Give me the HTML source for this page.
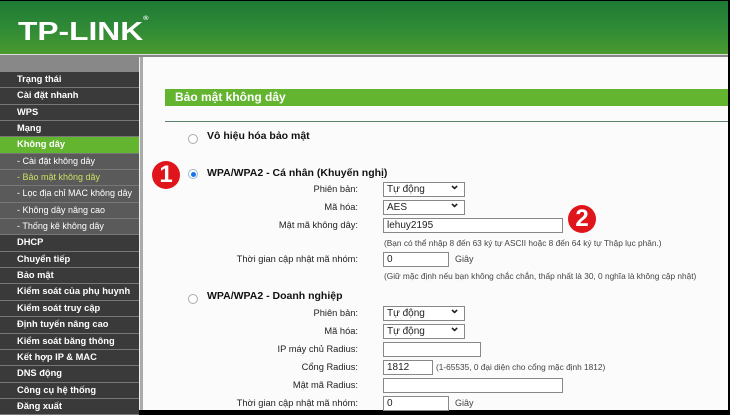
<!DOCTYPE html><html><head><meta charset="utf-8"><style>
*{margin:0;padding:0;box-sizing:border-box}
body{width:730px;height:410px;overflow:hidden;background:#000;font-family:"Liberation Sans",Arial,sans-serif;position:relative}
.hdr{position:absolute;left:0;top:1px;width:728px;height:53px;background:linear-gradient(#1e7a34,#2f8a36 50%,#4a9a30)}
.logo{position:absolute;left:18px;top:15px;color:#fff;font-weight:bold;font-size:26px;transform:scaleX(1.22);transform-origin:left}
.sep{position:absolute;left:0;top:54px;width:728px;height:3px;background:#888;border-top:1px solid #ddd}
.side{position:absolute;left:0;top:57px;width:139px;height:353px;background:#333}
.side .top{height:15px;background:#888}
.it{height:16.35px;border-bottom:1px solid #777;color:#fff;font-size:9.3px;font-weight:bold;padding-left:17px;line-height:15px;background:#3a3a3a;white-space:nowrap;overflow:hidden}
.it.s{background:#5a5a5a;font-weight:normal;font-size:9px}
.it.g{background:#63b530}
.it.y{color:#c8e060}
.bar{position:absolute;left:139px;top:57px;width:4px;height:353px;background:#aaa;border-left:1px solid #eee}
.main{position:absolute;left:143px;top:57px;width:585px;height:353px;background:#fbfbfb}
.title{position:absolute;left:165px;top:89px;width:563px;height:17px;background:#63b530;color:#fff;font-size:12px;font-weight:bold;padding-left:10px;line-height:17px}
.hl{position:absolute;left:165px;top:121px;width:563px;height:1px;background:#5a7f6a}
.t{position:absolute;font-size:10px;color:#111;white-space:nowrap}
.b{font-weight:bold;font-size:10.5px}
.lbl{position:absolute;right:372px;font-size:9.3px;color:#222;white-space:nowrap}
.in{position:absolute;left:383px;height:15px;border:1px solid #888;background:#fff;font-size:10px;padding-left:3px;line-height:13px;color:#222}
.sel::after{content:"⌄";position:absolute;right:4px;top:-5px;font-size:13px;font-weight:bold}
.h{position:absolute;font-size:8.3px;color:#444;white-space:nowrap}
.r{position:absolute;width:10px;height:10px;border:1px solid #aaa;border-radius:50%;background:#fff}
.num{position:absolute;width:28px;height:28px;border-radius:50%;background:#e0151b;color:#fff;font-weight:bold;font-size:24px;text-align:center;line-height:28px}
</style></head><body>
<div class="hdr"><div class="logo">TP-LINK<span style="font-size:6px;vertical-align:top">®</span></div></div>
<div class="sep"></div>
<div class="side"><div class="top"></div>
<div class="it">Trạng thái</div><div class="it">Cài đặt nhanh</div><div class="it">WPS</div><div class="it">Mạng</div><div class="it g">Không dây</div>
<div class="it s">- Cài đặt không dây</div><div class="it s y">- Bảo mật không dây</div><div class="it s">- Lọc địa chỉ MAC không dây</div><div class="it s">- Không dây nâng cao</div><div class="it s">- Thống kê không dây</div>
<div class="it">DHCP</div><div class="it">Chuyển tiếp</div><div class="it">Bảo mật</div><div class="it">Kiểm soát của phụ huynh</div><div class="it">Kiểm soát truy cập</div><div class="it">Định tuyến nâng cao</div><div class="it">Kiểm soát băng thông</div><div class="it">Kết hợp IP &amp; MAC</div><div class="it">DNS động</div><div class="it">Công cụ hệ thống</div><div class="it">Đăng xuất</div>
</div>
<div class="bar"></div>
<div class="main"></div>
<div class="title">Bảo mật không dây</div>
<div class="hl"></div>
<div class="r" style="left:188px;top:134px"></div><div class="t b" style="left:207px;top:130px">Vô hiệu hóa bảo mật</div>
<div class="r" style="left:188px;top:169px;border-color:#9bc"><div style="width:5px;height:5px;background:#1a73e8;border-radius:50%;margin:1.5px"></div></div>
<div class="t b" style="left:207px;top:167px">WPA/WPA2 - Cá nhân (Khuyến nghị)</div>
<div class="lbl" style="top:184px">Phiên bản:</div><div class="in sel" style="top:182px;width:82px">Tự động</div>
<div class="lbl" style="top:202px">Mã hóa:</div><div class="in sel" style="top:200px;width:82px">AES</div>
<div class="lbl" style="top:220px">Mật mã không dây:</div><div class="in" style="top:218px;width:180px">lehuy2195</div>
<div class="h" style="left:384px;top:238px">(Bạn có thể nhập 8 đến 63 ký tự ASCII hoặc 8 đến 64 ký tự Thập lục phân.)</div>
<div class="lbl" style="top:254px">Thời gian cập nhật mã nhóm:</div><div class="in" style="top:252px;width:66px">0</div><div class="h" style="left:455px;top:254px;font-size:9px">Giây</div>
<div class="h" style="left:384px;top:271px">(Giữ mặc định nếu bạn không chắc chắn, thấp nhất là 30, 0 nghĩa là không cập nhật)</div>
<div class="r" style="left:188px;top:294px"></div><div class="t b" style="left:207px;top:290px">WPA/WPA2 - Doanh nghiệp</div>
<div class="lbl" style="top:308px">Phiên bản:</div><div class="in sel" style="top:306px;width:82px">Tự động</div>
<div class="lbl" style="top:326px">Mã hóa:</div><div class="in sel" style="top:324px;width:82px">Tự động</div>
<div class="lbl" style="top:344px">IP máy chủ Radius:</div><div class="in" style="top:342px;width:98px"></div>
<div class="lbl" style="top:362px">Cổng Radius:</div><div class="in" style="top:360px;width:50px">1812</div><div class="h" style="left:436px;top:362px">(1-65535, 0 đại diện cho cổng mặc định 1812)</div>
<div class="lbl" style="top:380px">Mật mã Radius:</div><div class="in" style="top:378px;width:180px"></div>
<div class="lbl" style="top:398px">Thời gian cập nhật mã nhóm:</div><div class="in" style="top:396px;width:66px">0</div><div class="h" style="left:455px;top:398px;font-size:9px">Giây</div>
<div class="num" style="left:152px;top:161px">1</div>
<div class="num" style="left:568px;top:205px">2</div>
</body></html>
